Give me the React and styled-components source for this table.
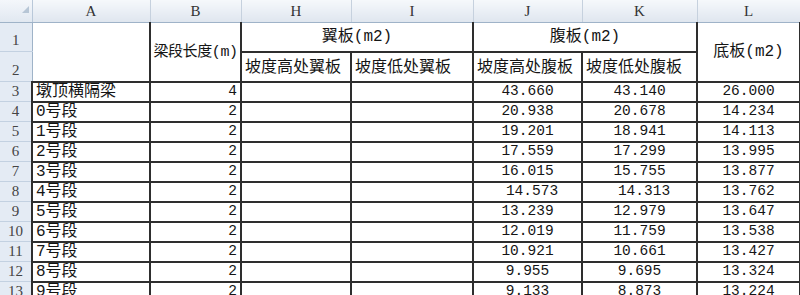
import React from 'react';
import styled, { createGlobalStyle } from 'styled-components';

const GlobalStyle = createGlobalStyle`
  html, body {
    margin: 0;
    padding: 0;
    background: #fff;
  }
  body {
    font-family: "Liberation Mono", "Noto Sans CJK SC", monospace;
    overflow: hidden;
  }
`;

const Sheet = styled.table`
  border-collapse: collapse;
  table-layout: fixed;
  width: 800px;
  color: #151515;
`;

const HeadRow = styled.tr`
  height: 20px;
`;

const Row = styled.tr`
  height: ${props => props.$h || 20}px;
`;

const Corner = styled.th`
  padding: 0 3px 4px 0;
  background: linear-gradient(#f4f7fb, #e1e8f1);
  border-right: 1px solid #b9c8d9;
  border-bottom: 1px solid #9fb3c8;
  vertical-align: bottom;
  text-align: right;
`;

const SelectAll = styled.span`
  display: inline-block;
  width: 0;
  height: 0;
  border-left: 7px solid transparent;
  border-bottom: 7px solid #b7c6d6;
`;

const ColHead = styled.th`
  padding: 0;
  background: linear-gradient(#f5f8fb, #dfe6ef);
  border-right: 1px solid #c6d1de;
  border-bottom: 1px solid #9fb3c8;
  font: 400 15px "Liberation Serif", serif;
  color: #333;
  text-align: center;
  vertical-align: middle;
`;

const RowHead = styled.th`
  padding: 0 0 ${props => (props.$tall ? 2 : 0)}px;
  background: #e4ebf4;
  border-right: 1px solid #9fb3c8;
  border-bottom: 1px solid #c3d1e1;
  font: 400 15px "Liberation Serif", serif;
  color: #444;
  text-align: center;
  vertical-align: ${props => (props.$tall ? 'bottom' : 'middle')};
`;

const Cell = styled.td`
  padding: 0 ${props => props.$pr ?? 3}px ${props => props.$pb || 0}px
    ${props => props.$pl ?? 3}px;
  border: 2px solid #2e2e2e;
  border-top: ${props => (props.$noTop ? 'none' : '2px solid #2e2e2e')};
  border-left: ${props => (props.$noLeft ? 'none' : '2px solid #2e2e2e')};
  font-size: ${props => (props.$num ? 14.5 : 16)}px;
  text-align: ${props => props.$align || 'left'};
  vertical-align: ${props => props.$valign || 'middle'};
  white-space: nowrap;
  overflow: hidden;
  line-height: 1;
`;

const UnitLabel = styled.span`
  font-size: 15px;
  letter-spacing: -0.4px;
`;

const widths = [32, 118, 91, 110, 122, 109, 115, 103];
const letters = ['A', 'B', 'H', 'I', 'J', 'K', 'L'];

const rows = [
  { name: '墩顶横隔梁', len: 4, j: '43.660', k: '43.140', l: '26.000' },
  { name: '0号段', len: 2, j: '20.938', k: '20.678', l: '14.234' },
  { name: '1号段', len: 2, j: '19.201', k: '18.941', l: '14.113' },
  { name: '2号段', len: 2, j: '17.559', k: '17.299', l: '13.995' },
  { name: '3号段', len: 2, j: '16.015', k: '15.755', l: '13.877' },
  { name: '4号段', len: 2, j: '14.573', k: '14.313', l: '13.762', shift: true },
  { name: '5号段', len: 2, j: '13.239', k: '12.979', l: '13.647' },
  { name: '6号段', len: 2, j: '12.019', k: '11.759', l: '13.538' },
  { name: '7号段', len: 2, j: '10.921', k: '10.661', l: '13.427' },
  { name: '8号段', len: 2, j: '9.955', k: '9.695', l: '13.324' },
  { name: '9号段', len: 2, j: '9.133', k: '8.873', l: '13.224' },
];

export default function App() {
  return (
    <>
      <GlobalStyle />
      <Sheet>
        <colgroup>
          {widths.map((w, i) => (
            <col key={i} style={{ width: w }} />
          ))}
        </colgroup>
        <tbody>
          <HeadRow>
            <Corner>
              <SelectAll />
            </Corner>
            {letters.map(c => (
              <ColHead key={c}>{c}</ColHead>
            ))}
          </HeadRow>

          <Row $h={29}>
            <RowHead $tall>1</RowHead>
            <Cell rowSpan={2} $noTop $noLeft />
            <Cell rowSpan={2} $noTop $align="center" $pl={0} $pr={0}>
              <UnitLabel>梁段长度(m)</UnitLabel>
            </Cell>
            <Cell colSpan={2} $noTop $align="center">
              翼板(m2)
            </Cell>
            <Cell colSpan={2} $noTop $align="center">
              腹板(m2)
            </Cell>
            <Cell rowSpan={2} $noTop $align="center">
              底板(m2)
            </Cell>
          </Row>
          <Row $h={30}>
            <RowHead $tall>2</RowHead>
            <Cell $valign="bottom" $pb={5}>坡度高处翼板</Cell>
            <Cell $valign="bottom" $pb={5}>坡度低处翼板</Cell>
            <Cell $valign="bottom" $pb={5}>坡度高处腹板</Cell>
            <Cell $valign="bottom" $pb={5}>坡度低处腹板</Cell>
          </Row>

          {rows.map((r, i) => (
            <Row key={r.name}>
              <RowHead>{i + 3}</RowHead>
              <Cell>{r.name}</Cell>
              <Cell $num $align="right">{r.len}</Cell>
              <Cell />
              <Cell />
              <Cell $num $align="center" $pl={r.shift ? 12 : 3}>{r.j}</Cell>
              <Cell $num $align="center" $pl={r.shift ? 12 : 3}>{r.k}</Cell>
              <Cell $num $align="center">{r.l}</Cell>
            </Row>
          ))}
        </tbody>
      </Sheet>
    </>
  );
}
